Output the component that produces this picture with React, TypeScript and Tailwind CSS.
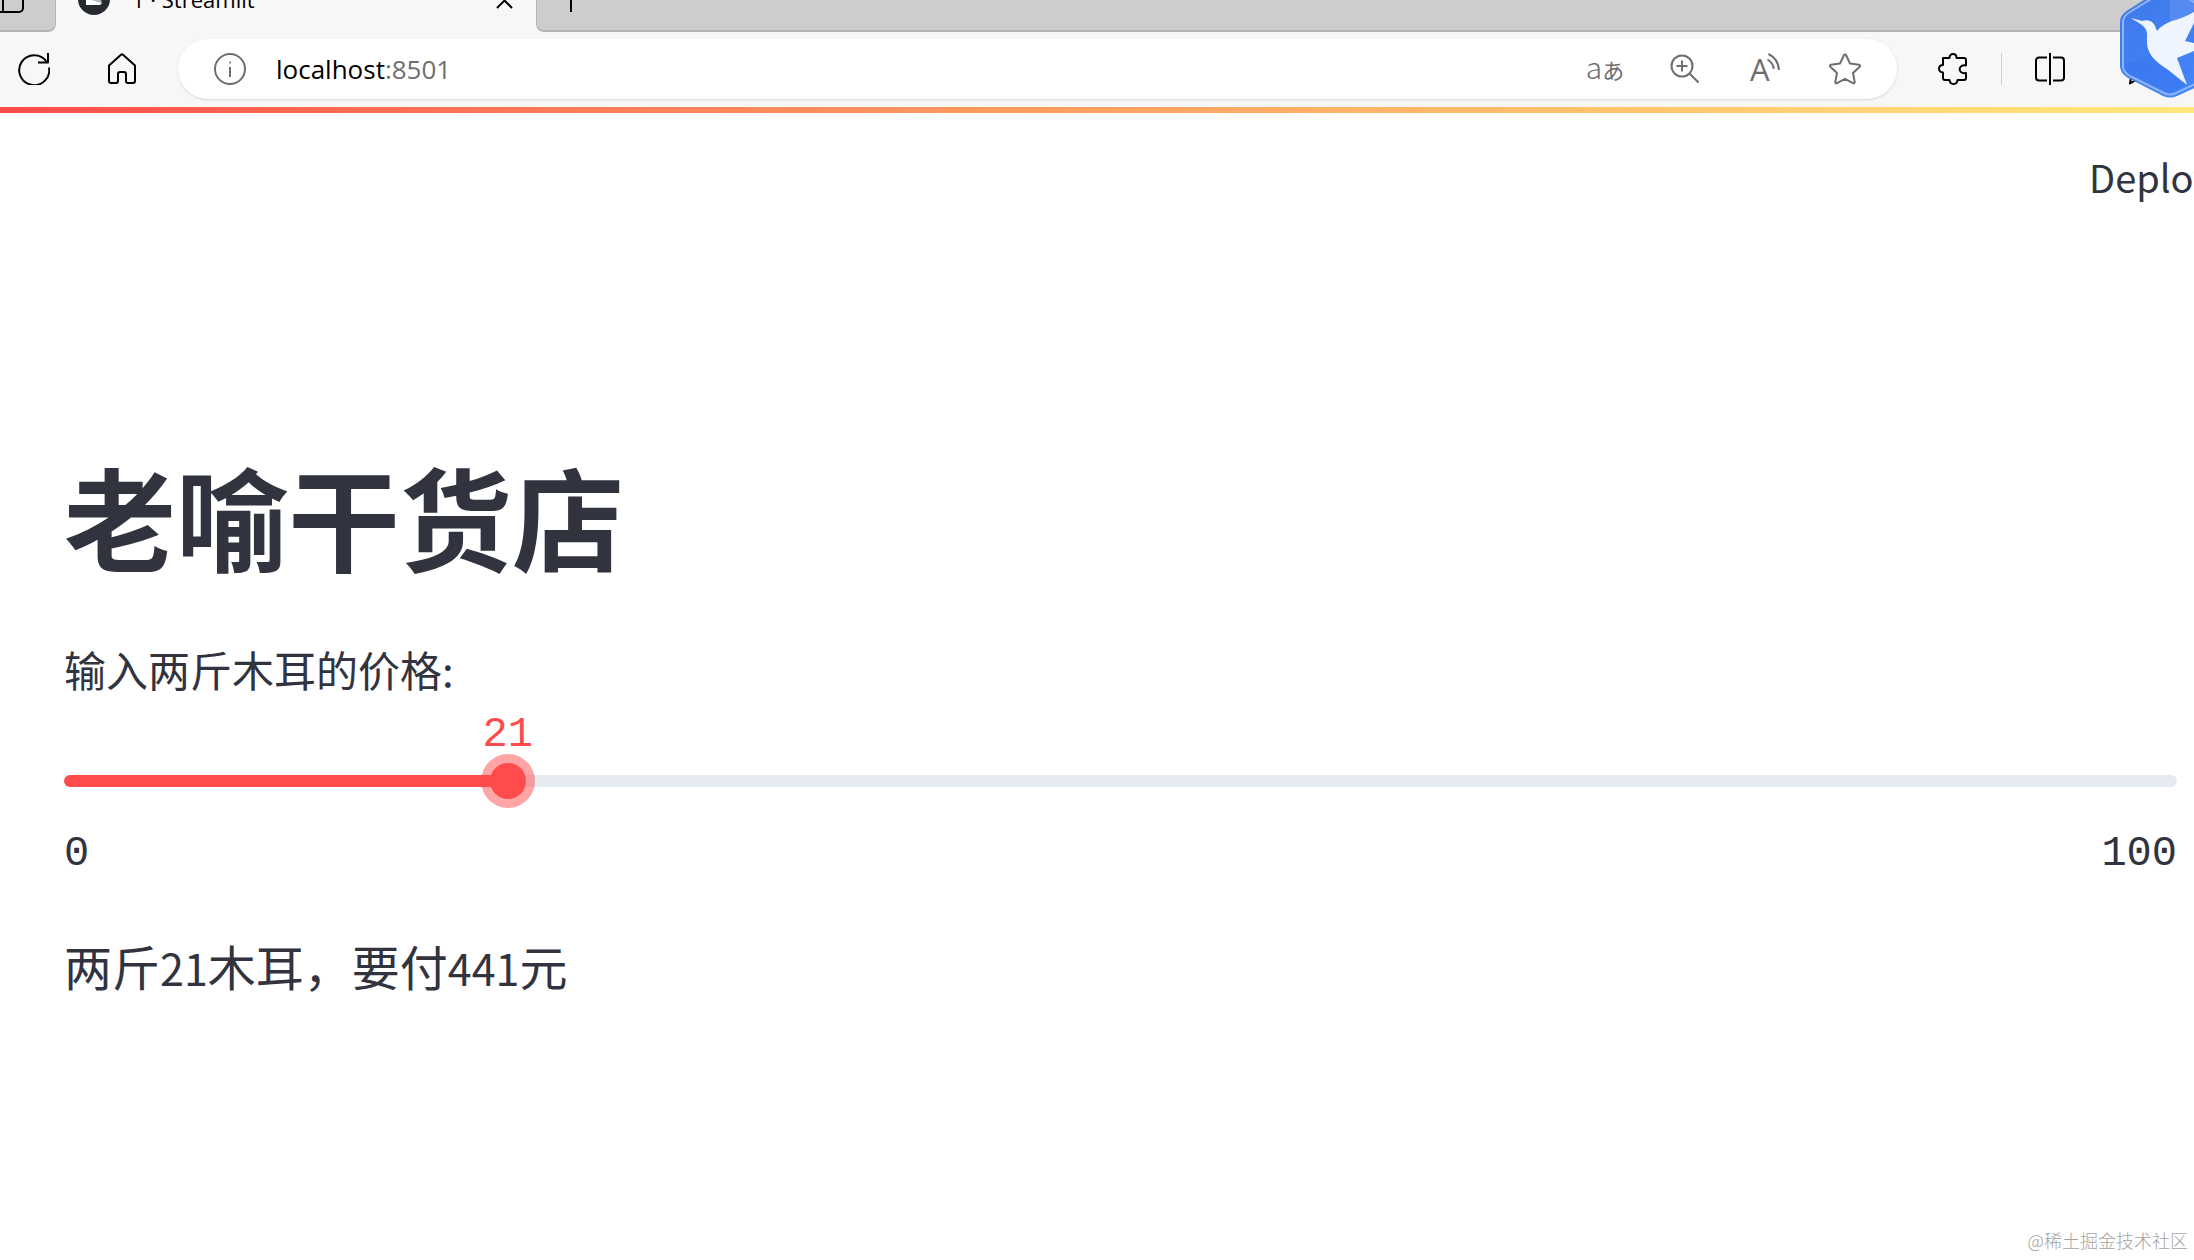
import React, { useState } from 'react';

const MIN = 0;
const MAX = 100;

function TabBar() {
  return (
    <div className="flex h-8 overflow-hidden bg-[#f7f7f7]">
      <div className="w-14 shrink-0 rounded-br-lg border-b-2 border-r border-[#b4b4b4] bg-[#cdcdcd]">
        <button type="button" aria-label="Tab actions" className="block">
          <svg width="26" height="16" viewBox="0 0 26 16" fill="none" stroke="#000" strokeWidth="2">
            <path d="M0 12H19a4 4 0 0 0 4-4V0M3 0v12" />
          </svg>
        </button>
      </div>
      <div className="flex w-[480px] shrink-0 items-start pl-[22px] pr-4">
        <svg className="shrink-0" width="32" height="16" viewBox="0 0 32 16">
          <circle cx="16" cy="-1" r="16" fill="#262930" />
          <path d="M8 0h7l9 3-2 2H8z" fill="#fff" />
          <path d="M14 0h9l1 3z" fill="#b9bbc0" />
        </svg>
        <div className="-mt-[17px] ml-[22px] flex-1 whitespace-nowrap text-[22px] leading-8 text-black">
          1 · Streamlit
        </div>
        <button type="button" aria-label="Close tab">
          <svg width="32" height="16" viewBox="0 0 32 16" fill="none" stroke="#000" strokeWidth="2">
            <path d="M9 8 24 -7M24 8 9 -7" />
          </svg>
        </button>
      </div>
      <div className="flex-1 rounded-bl-lg border-b-2 border-l border-[#b4b4b4] bg-[#cdcdcd] pl-[18px]">
        <button type="button" aria-label="New tab" className="block">
          <svg width="32" height="16" viewBox="0 0 32 16" fill="none" stroke="#000" strokeWidth="2">
            <path d="M16 -16V12" />
          </svg>
        </button>
      </div>
    </div>
  );
}

function ToolIcon({ label, children }: { label: string; children: React.ReactNode }) {
  return (
    <button type="button" aria-label={label} className="block h-8 w-8 shrink-0">
      <svg width="32" height="32" viewBox="0 0 32 32" fill="none" stroke="currentColor" strokeWidth="2" strokeLinejoin="round">
        {children}
      </svg>
    </button>
  );
}

function Toolbar() {
  return (
    <div className="flex items-center bg-[#f7f7f7] pb-2 pl-[18px] pr-9 pt-[7px] text-black">
      <ToolIcon label="Refresh">
        <path d="M28.5 8.500A15 15 0 1 0 31 14.500M30 0v9.500H20" />
      </ToolIcon>
      <div className="ml-14">
        <ToolIcon label="Home">
          <path d="M3 12.500 15 1.800a1.500 1.500 0 0 1 2 0l12 10.700V28a2 2 0 0 1-2 2h-5a2 2 0 0 1-2-2v-7a2 2 0 0 0-2-2h-4a2 2 0 0 0-2 2v7a2 2 0 0 1-2 2H5a2 2 0 0 1-2-2z" />
        </ToolIcon>
      </div>
      <div className="ml-10 flex h-[60px] flex-1 items-center rounded-full bg-white pl-9 pr-9 text-[#6e6e6e] shadow-sm">
        <ToolIcon label="Site information">
          <circle cx="16" cy="16" r="15" />
          <path d="M16 14v10" />
          <circle cx="16" cy="9.500" r="1" fill="currentColor" stroke="none" />
        </ToolIcon>
        <div className="ml-[30px] flex-1 text-[26px] leading-8">
          <span className="text-black">localhost</span>:8501
        </div>
        <div className="flex items-center gap-12">
          <button type="button" aria-label="Translate" className="flex h-8 w-8 items-baseline justify-center font-['Noto_Sans_CJK_SC',sans-serif] text-[30px] font-light leading-[26px]">
            a<span className="text-[22px] font-normal">あ</span>
          </button>
          <ToolIcon label="Zoom">
            <circle cx="13" cy="13" r="10.500" />
            <path d="M20.500 20.500 29.500 29.500M13 7.500v11M7.500 13h11" />
          </ToolIcon>
          <ToolIcon label="Read aloud">
            <text x="1" y="28" fontSize="31" fill="currentColor" stroke="none" className="font-['Open_Sans',sans-serif]">A</text>
            <path d="M18.500 6.500c3.500 2 5.800 5.300 6.300 9.500M19.500 1c6 3 10 8.500 10.500 16" />
          </ToolIcon>
          <ToolIcon label="Add to favorites">
            <path d="M14.900 2.200a1.200 1.200 0 0 1 2.200 0l3.900 8.300 9.100 1.200a1.200 1.200 0 0 1 .6 2l-6.700 6.300 1.700 9a1.200 1.200 0 0 1-1.700 1.200L16 25.800l-8 4.400A1.200 1.200 0 0 1 6.300 29L8 20 1.300 13.700a1.200 1.200 0 0 1 .6-2L11 10.500z" />
          </ToolIcon>
        </div>
      </div>
      <div className="ml-10 flex items-center">
        <ToolIcon label="Extensions">
          <path d="M6 5h6.500c0-5.300 7-5.300 7 0H27a2 2 0 0 1 2 2v5.500c-8.500-1.500-8.500 9 0 7.500V25a2 2 0 0 1-2 2h-6.500c-.5 5.300-7.500 5.300-8 0H8a2 2 0 0 1-2-2v-5.500c-5.300 0-5.300-7.500 0-7.500z" />
        </ToolIcon>
        <div className="mx-8 h-8 w-px bg-[#cfcfcf]" />
        <ToolIcon label="Split screen">
          <path d="M13 4.500H5a3 3 0 0 0-3 3v17a3 3 0 0 0 3 3h8M19 4.500h8a3 3 0 0 1 3 3v17a3 3 0 0 1-3 3h-8M16 0v32" />
        </ToolIcon>
        <div className="ml-[60px]">
          <ToolIcon label="Favorites">
            <path d="M16 2l4 9 9 1-6.500 6.500L24 28l-8-4.500L4 30.500 6 19 1 12l10-1z" />
          </ToolIcon>
        </div>
      </div>
    </div>
  );
}

function BirdBadge() {
  return (
    <svg className="absolute right-0 top-0" width="74" height="98" viewBox="0 0 74 98">
      <defs>
        <linearGradient id="badge" x1="0" y1="0" x2="0.6" y2="1">
          <stop offset="0" stopColor="#3f78e6" />
          <stop offset="1" stopColor="#4285fb" />
        </linearGradient>
      </defs>
      <path d="M8 10 43-12q7-4 14 0L92 10q8 5 8 12v46q0 7-8 12L57 96q-7 3-14 0L8 78q-8-5-8-12V22q0-7 8-12z" fill="url(#badge)" />
      <path d="M3 66 32 54 67 84 50 95 10 76z" fill="#3470ea" opacity="0.4" />
      <path d="M50 0h24v14L50 24z" fill="#6a98ef" opacity="0.5" />
      <path d="M10 12 44-9q6-3 12 0L90 12q7 4 7 10v45q0 6-7 10L56 93q-6 3-12 0L10 76q-7-4-7-10V22q0-6 7-10z" fill="none" stroke="#8db4fb" strokeWidth="2" />
      <path d="M11 18 22 21c5-2 11 0 13 5l2 5c4-5 9-8 15-10 8-2 15-5 22-9v11l-9 18 9 2v8l-17 7 10 27-20-16C34 61 27 53 27 42c0-7 1-11-3-15-2-3-7-5-13-9z" fill="#eff5ff" />
    </svg>
  );
}

function PriceSlider({ value, onChange }: { value: number; onChange: (value: number) => void }) {
  const percent = ((value - MIN) / (MAX - MIN)) * 100;

  return (
    <div>
      <label htmlFor="price" className="block font-['Noto_Sans_CJK_SC',sans-serif] text-[42px] leading-[60px]">
        输入两斤木耳的价格:
      </label>
      <div className="relative mt-[76px] h-3 rounded-full bg-[#e6eaf1]">
        <div className="h-3 rounded-full bg-[#ff4b4b]" style={{ width: `${percent}%` }} />
        <output
          htmlFor="price"
          className="absolute bottom-7 -translate-x-1/2 font-['Liberation_Mono',monospace] text-[42px] leading-12 text-[#ff4b4b]"
          style={{ left: `${percent}%` }}
        >
          {value}
        </output>
        {/* wider than the track by one thumb, so the thumb centre follows the fill */}
        <input
          id="price"
          type="range"
          min={MIN}
          max={MAX}
          value={value}
          onChange={(e) => onChange(Number(e.target.value))}
          className="absolute -left-[18px] -top-3 h-9 w-[calc(100%+36px)] cursor-pointer appearance-none bg-transparent outline-none [&::-webkit-slider-thumb]:h-9 [&::-webkit-slider-thumb]:w-9 [&::-webkit-slider-thumb]:appearance-none [&::-webkit-slider-thumb]:rounded-full [&::-webkit-slider-thumb]:bg-[#ff4b4b] [&::-webkit-slider-thumb]:shadow-[0_0_0_9px_rgba(255,75,75,0.5)]"
        />
      </div>
      <div className="mt-10 flex justify-between font-['Liberation_Mono',monospace] text-[42px] leading-[54px]">
        <span>{MIN}</span>
        <span>{MAX}</span>
      </div>
    </div>
  );
}

export default function App() {
  const [price, setPrice] = useState(21);

  return (
    <div className="relative flex min-h-screen flex-col overflow-hidden bg-white font-['Open_Sans','Noto_Sans_CJK_SC',sans-serif] text-[#31333f]">
      <TabBar />
      <Toolbar />
      <BirdBadge />
      <div className="h-[6px] bg-gradient-to-r from-[#ff4b4b] to-[#fde87a]" />

      <header className="flex justify-end pt-[34px]">
        <button type="button" className="w-[105px] whitespace-nowrap text-left font-['Noto_Sans_CJK_SC',sans-serif] text-[38px] leading-[60px]">
          Deploy
        </button>
      </header>

      <main className="pl-16 pr-[17px] pt-[238px]">
        <h1 className="font-['Noto_Sans_CJK_SC',sans-serif] text-[112px] font-bold leading-[140px]">老喻干货店</h1>
        <div className="mt-[54px]">
          <PriceSlider value={price} onChange={setPrice} />
        </div>
        <p className="mt-12 font-['Noto_Sans_CJK_SC',sans-serif] text-[48px] leading-[72px]">
          两斤<span className="text-[43px]">{price}</span>木耳，要付<span className="text-[43px]">{price * price}</span>元
        </p>
      </main>

      <footer className="mt-auto pb-2 pr-[6px] text-right font-['Noto_Sans_CJK_SC',sans-serif] text-[18px] font-light leading-6 text-[#a3a3a3]">
        @稀土掘金技术社区
      </footer>
    </div>
  );
}
